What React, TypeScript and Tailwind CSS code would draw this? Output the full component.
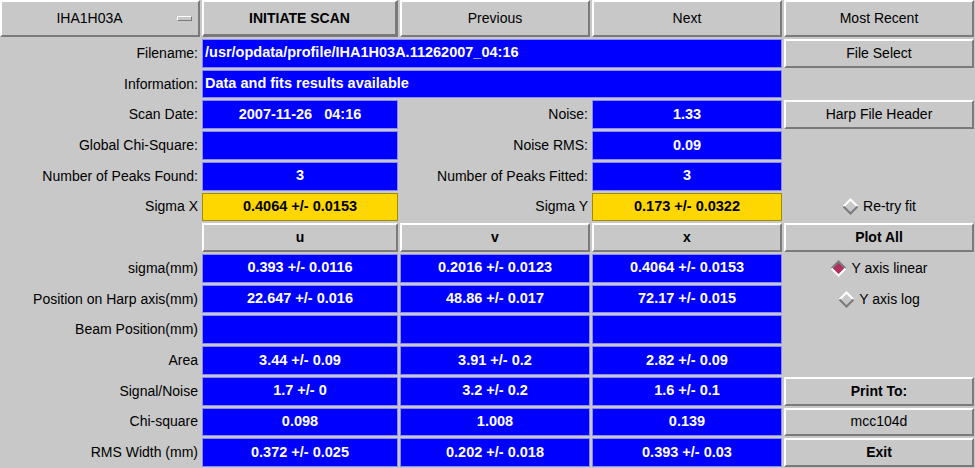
import React from 'react';

const btn =
  "flex items-center justify-center bg-[#c8c8c8] text-[14px] text-black border-2 border-t-white border-l-white border-r-[#7a7a7a] border-b-[#7a7a7a]";
const blue =
  "flex items-center justify-center bg-[#0000ff] border border-[#8a8aff] text-white font-bold text-[14.5px] whitespace-pre";
const yellow =
  "flex items-center justify-center bg-[#ffd700] border border-[#a08c00] text-black font-bold text-[14.5px]";
const label = "flex items-center justify-end pr-[2px] text-[14px] text-black whitespace-nowrap";

const Radio: React.FC<{ text: string; checked?: boolean }> = ({ text, checked }) => (
  <div className="flex items-center justify-center gap-[4px] text-[14px] text-black">
    <svg width="17" height="17" viewBox="0 0 17 17">
      <polygon points="8.5,1.5 15.5,8.5 8.5,15.5 1.5,8.5" fill={checked ? '#b03060' : '#c8c8c8'} />
      <polyline points="1.5,8.5 8.5,1.5 15.5,8.5" fill="none" stroke={checked ? '#7a7a7a' : '#ffffff'} strokeWidth="2" />
      <polyline points="1.5,8.5 8.5,15.5 15.5,8.5" fill="none" stroke={checked ? '#ffffff' : '#7a7a7a'} strokeWidth="2" />
    </svg>
    <span>{text}</span>
  </div>
);

const rows: [string, string, string, string][] = [
  ['sigma(mm)', '0.393 +/- 0.0116', '0.2016 +/- 0.0123', '0.4064 +/- 0.0153'],
  ['Position on Harp axis(mm)', '22.647 +/- 0.016', '48.86 +/- 0.017', '72.17 +/- 0.015'],
  ['Beam Position(mm)', '', '', ''],
  ['Area', '3.44 +/- 0.09', '3.91 +/- 0.2', '2.82 +/- 0.09'],
  ['Signal/Noise', '1.7 +/- 0', '3.2 +/- 0.2', '1.6 +/- 0.1'],
  ['Chi-square', '0.098', '1.008', '0.139'],
  ['RMS Width (mm)', '0.372 +/- 0.025', '0.202 +/- 0.018', '0.393 +/- 0.03'],
];

const side: React.ReactNode[] = [
  <Radio key="lin" text="Y axis linear" checked />,
  <Radio key="log" text="Y axis log" />,
  <div key="e1" />,
  <div key="e2" />,
  <button key="print" className={`${btn} font-bold`}>Print To:</button>,
  <button key="mcc" className={btn}>mcc104d</button>,
  <button key="exit" className={`${btn} font-bold`}>Exit</button>,
];

export default function App() {
  return (
    <div className="w-[975px] h-[468px] bg-[#c8c8c8] font-['Liberation_Sans',Arial,sans-serif] overflow-hidden">
      <div className="grid h-full grid-cols-[200px_196px_190px_190px_190px] grid-rows-[37px_repeat(14,minmax(0,1fr))] gap-[2px] pb-[1px]">
        {/* top bar */}
        <div className={`${btn} justify-between`}>
          <span className="flex-1 text-center">IHA1H03A</span>
          <span className="w-[15px] h-[5px] mr-[6px] bg-[#c8c8c8] border border-t-white border-l-white border-r-[#7a7a7a] border-b-[#7a7a7a]" />
        </div>
        <button className={`${btn} font-bold border-b-[3px] border-r-[3px]`}>INITIATE SCAN</button>
        <button className={btn}>Previous</button>
        <button className={btn}>Next</button>
        <button className={btn}>Most Recent</button>

        <div className={label}>Filename:</div>
        <div className={`${blue} col-span-3 justify-start pl-[2px]`}>/usr/opdata/profile/IHA1H03A.11262007_04:16</div>
        <button className={btn}>File Select</button>

        <div className={label}>Information:</div>
        <div className={`${blue} col-span-3 justify-start pl-[2px]`}>Data and fits results available</div>
        <div />

        <div className={label}>Scan Date:</div>
        <div className={blue}>2007-11-26   04:16</div>
        <div className={label}>Noise:</div>
        <div className={blue}>1.33</div>
        <button className={btn}>Harp File Header</button>

        <div className={label}>Global Chi-Square:</div>
        <div className={blue}></div>
        <div className={label}>Noise RMS:</div>
        <div className={blue}>0.09</div>
        <div />

        <div className={label}>Number of Peaks Found:</div>
        <div className={blue}>3</div>
        <div className={label}>Number of Peaks Fitted:</div>
        <div className={blue}>3</div>
        <div />

        <div className={label}>Sigma X</div>
        <div className={yellow}>0.4064 +/- 0.0153</div>
        <div className={label}>Sigma Y</div>
        <div className={yellow}>0.173 +/- 0.0322</div>
        <Radio text="Re-try fit" />

        <div />
        <button className={`${btn} font-bold`}>u</button>
        <button className={`${btn} font-bold`}>v</button>
        <button className={`${btn} font-bold`}>x</button>
        <button className={`${btn} font-bold`}>Plot All</button>

        {rows.map((r, i) => (
          <React.Fragment key={r[0]}>
            <div className={label}>{r[0]}</div>
            <div className={blue}>{r[1]}</div>
            <div className={blue}>{r[2]}</div>
            <div className={blue}>{r[3]}</div>
            {side[i]}
          </React.Fragment>
        ))}
      </div>
    </div>
  );
}
